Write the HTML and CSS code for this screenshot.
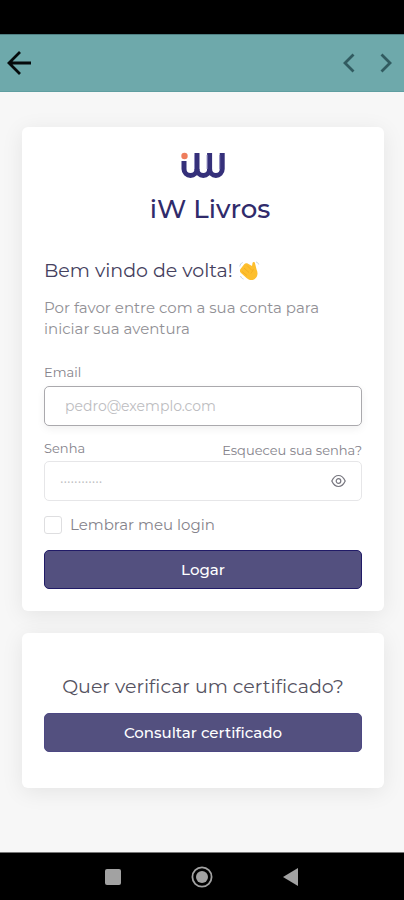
FILE: index.html
```html
<!DOCTYPE html>
<html lang="pt-BR">
<head>
<meta charset="utf-8">
<meta name="viewport" content="width=device-width, initial-scale=1">
<title>iW Livros</title>
<link rel="stylesheet" href="styles.css">
</head>
<body>
<div class="status-bar"></div>
<header class="toolbar">
  <button class="icon-button" type="button" aria-label="Voltar">
    <svg width="26" height="26" viewBox="0 0 26 26" fill="none" stroke="#050b0c" stroke-width="2.800"><path d="M25 13H3M14 2L3 13l11 11"/></svg>
  </button>
  <div class="toolbar-nav">
    <button class="icon-button" type="button" aria-label="Anterior">
      <svg width="12" height="20" viewBox="0 0 12 20" fill="none" stroke="#315b60" stroke-width="2.800"><path d="M10.500 1.500L2 10l8.500 8.500"/></svg>
    </button>
    <button class="icon-button" type="button" aria-label="Próximo">
      <svg width="12" height="20" viewBox="0 0 12 20" fill="none" stroke="#315b60" stroke-width="2.800"><path d="M1.500 1.500L10 10l-8.500 8.500"/></svg>
    </button>
  </div>
</header>
<main class="content">
  <section class="card">
    <div class="brand">
      <svg width="44" height="27" viewBox="0 0 44 27" fill="none" aria-hidden="true">
        <circle cx="3.500" cy="4" r="3.200" fill="#ee7d5c"/>
        <g stroke="#35307a" stroke-width="5">
          <path d="M3 9v8a6.500 6.500 0 0 0 13 0V1"/>
          <path d="M16 17a6.300 6.500 0 0 0 12.600 0V1"/>
          <path d="M28.600 17a6.300 6.500 0 0 0 12.600 0V1"/>
        </g>
        <path d="M13.500 3v14M26.100 3v14M38.700 3v14" stroke="#8f8cbe" stroke-width="1"/>
      </svg>
      <h1 class="brand-name">iW Livros</h1>
    </div>
    <h2 class="welcome">Bem vindo de volta!
      <svg width="21" height="21" viewBox="0 0 21 21" role="img" aria-label="Mão acenando">
        <path d="M1.500 8L5 3.500c1-1.200 2.500-1.500 4-.8l4 2.300.5-3c.3-1.500 2.300-1.300 2.500.2l1.500 6c2 4.500 1 8.500-2.500 10.300-3 1.300-5.500.2-7.500-1.500L2 12c-1.200-1.200-1.500-2.700-.5-4z" fill="#fdbf2e"/>
        <path d="M5 7l5 4.500M8 4.500l5 5M3 10.500l5 4M14.300 8c-.3 2-1.500 3-2.500 4.500" fill="none" stroke="#f3a91f" stroke-width=".8"/>
        <path d="M.8 5.500C1 3.500 2.200 2 3.700 1.500M1.500 15c.5 1.500 1.500 2.500 3 3M17 1c1.300.3 2.200 1 2.700 2.500" fill="none" stroke="#b5c7cf" stroke-width=".8"/>
      </svg>
    </h2>
    <p class="intro">Por favor entre com a sua conta para iniciar sua aventura</p>
    <form class="login-form">
      <label class="label" for="email">Email</label>
      <input class="input input-active" id="email" type="email" placeholder="pedro@exemplo.com">
      <div class="label-row">
        <label class="label" for="password">Senha</label>
        <a class="forgot" href="#">Esqueceu sua senha?</a>
      </div>
      <div class="password-box">
        <input class="password-input" id="password" type="password" placeholder="············">
        <button class="icon-button" type="button" aria-label="Mostrar senha">
          <svg width="15" height="14" viewBox="0 0 15 14" fill="none" stroke="#77767f" stroke-width="1.200"><path d="M.8 7C2.500 3.300 4.800 1.500 7.500 1.500s5 1.800 6.700 5.500c-1.700 3.700-4 5.500-6.700 5.500S2.500 10.700.8 7z"/><circle cx="7.500" cy="7" r="2.300"/></svg>
        </button>
      </div>
      <div class="remember">
        <input class="checkbox" id="remember" type="checkbox">
        <label for="remember">Lembrar meu login</label>
      </div>
      <button class="primary primary-outlined" type="submit">Logar</button>
    </form>
  </section>
  <section class="card card-certificate">
    <h2 class="certificate-title">Quer verificar um certificado?</h2>
    <button class="primary" type="button">Consultar certificado</button>
  </section>
</main>
<nav class="system-nav" aria-label="Sistema">
  <button class="icon-button" type="button" aria-label="Recentes">
    <svg width="24" height="24" viewBox="0 0 24 24"><rect x="4" y="4" width="16" height="16" rx="2" fill="#a2a2a2"/></svg>
  </button>
  <button class="icon-button" type="button" aria-label="Início">
    <svg width="24" height="24" viewBox="0 0 24 24"><circle cx="12" cy="12" r="9.600" fill="none" stroke="#a2a2a2" stroke-width="1.800"/><circle cx="12" cy="12" r="6" fill="#a2a2a2"/></svg>
  </button>
  <button class="icon-button" type="button" aria-label="Voltar ao anterior">
    <svg width="24" height="24" viewBox="0 0 24 24"><path d="M19 3v18L4 12z" fill="#a2a2a2"/></svg>
  </button>
</nav>
</body>
</html>
```

FILE: styles.css
```css
* {
  box-sizing: border-box;
}

body {
  margin: 0;
  min-height: 100vh;
  display: flex;
  flex-direction: column;
  background: #f7f7f7;
  color: #85838b;
  font-family: Montserrat, Inter, sans-serif;
}

h1,
h2,
p {
  margin: 0;
  font-weight: 400;
}

button,
input {
  font: inherit;
}

svg {
  display: block;
}

.icon-button {
  padding: 0;
  border: 0;
  background: none;
}

.status-bar {
  height: 34px;
  background: #000;
}

.toolbar {
  display: flex;
  align-items: center;
  justify-content: space-between;
  height: 58px;
  padding: 0 12px 0 6px;
  background: #6ea9ab;
  border-top: 1px solid #4f7f82;
  border-bottom: 1px solid #5f9ea1;
}

.toolbar-nav {
  display: flex;
  gap: 25px;
}

.content {
  flex: 1;
  display: flex;
  flex-direction: column;
  gap: 22px;
  padding: 35px 20px 64px 22px;
}

.card {
  padding: 25px 22px 22px;
  border-radius: 6px;
  background: #fff;
  box-shadow: 0 4px 22px rgba(0, 0, 0, 0.08);
}

.brand {
  display: flex;
  flex-direction: column;
  align-items: center;
  gap: 14px;
}

.brand-name {
  padding-left: 14px;
  color: #302b6b;
  font-size: 26px;
  line-height: 32px;
  font-weight: 500;
}

.welcome {
  display: flex;
  align-items: center;
  gap: 6px;
  margin-top: 34px;
  color: #45415e;
  font-size: 19px;
  line-height: 24px;
}

.intro {
  margin-top: 14px;
  color: #919095;
  font-size: 15px;
  line-height: 21px;
}

.login-form {
  display: flex;
  flex-direction: column;
  margin-top: 24px;
}

.label,
.forgot {
  color: #85838b;
  font-size: 13px;
  line-height: 18px;
}

.input,
.password-box {
  width: 100%;
  height: 40px;
  border: 1px solid #e6e6e8;
  border-radius: 5px;
  background: #fff;
}

.input {
  margin-top: 5px;
  padding: 0 20px;
  font-size: 14px;
}

.input-active {
  border-color: #aaa9ad;
  box-shadow: 0 3px 8px rgba(0, 0, 0, 0.06);
}

.input::placeholder,
.password-input::placeholder {
  color: #bdbdc1;
  opacity: 1;
}

.label-row {
  display: flex;
  justify-content: space-between;
  align-items: flex-end;
  height: 20px;
  margin-top: 13px;
}

.label-row .label {
  align-self: flex-start;
}

.forgot {
  text-decoration: none;
}

.password-box {
  display: flex;
  align-items: center;
  margin-top: 2px;
  padding: 0 15px;
}

.password-input {
  flex: 1;
  min-width: 0;
  padding: 0;
  border: 0;
  background: none;
  font-size: 14px;
}

.remember {
  display: flex;
  align-items: center;
  gap: 8px;
  margin-top: 14px;
  font-size: 15px;
  line-height: 20px;
}

.checkbox {
  appearance: none;
  width: 18px;
  height: 18px;
  margin: 0;
  border: 1px solid #dedee0;
  border-radius: 3px;
}

.primary {
  width: 100%;
  height: 39px;
  padding: 0;
  border: 1px solid #4d4883;
  border-radius: 5px;
  background: #53507f;
  color: #fff;
  font-size: 15px;
  font-weight: 500;
}

.primary-outlined {
  margin-top: 15px;
  border-color: #211b67;
}

.card-certificate {
  padding: 42px 22px 36px;
}

.certificate-title {
  margin-bottom: 14px;
  color: #55525f;
  font-size: 19px;
  line-height: 24px;
  text-align: center;
}

.system-nav {
  display: flex;
  justify-content: center;
  gap: 65px;
  height: 48px;
  border-top: 1px solid #777;
  background: #000;
}
```
